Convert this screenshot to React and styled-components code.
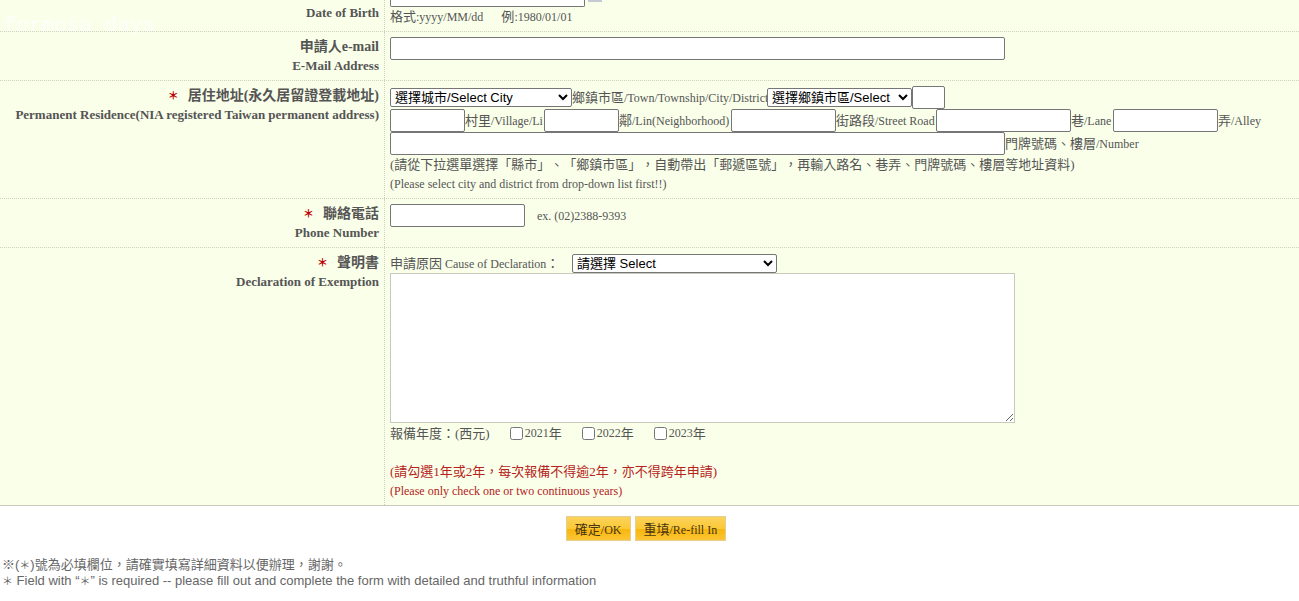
import React from "react";
import styled, { createGlobalStyle } from "styled-components";

const serif = `"Liberation Serif", "Noto Sans CJK TC", serif`;
const sans = `"Liberation Sans", "Noto Sans CJK TC", sans-serif`;

const GlobalStyle = createGlobalStyle`
  *, *::before, *::after { box-sizing: border-box; }
  body {
    margin: 0;
    background: #fff;
    color: #555;
    font: 13px/19px ${serif};
    text-spacing-trim: space-all;
  }
`;

const Page = styled.main`
  position: relative;
`;

const Watermark = styled.span`
  position: absolute;
  top: 16px;
  left: 4px;
  color: rgba(255, 255, 255, 0.8);
  font: 21px/20px "Liberation Mono", monospace;
  pointer-events: none;
`;

const Sheet = styled.div`
  background: #faffea;
  border-bottom: 1px solid #c6cbbb;
`;

const Row = styled.div`
  display: grid;
  grid-template-columns: 385px minmax(0, 1fr);
  border-bottom: 1px dotted #ccd2bd;
  &:last-child { border-bottom: 0; }
`;

const Heading = styled.div`
  padding: ${(p) => (p.$clipped ? 3 : 5)}px 5px 5px 0;
  border-right: 1px dotted #ccd2bd;
  text-align: right;
  font-weight: bold;
  font-size: 14px;
  white-space: nowrap;
  label { display: block; }
`;

const EnglishTitle = styled.span`
  display: block;
  font-size: 13px;
`;

/* Latin runs are set one step smaller than the Chinese beside them. */
const En = styled.span`
  font-size: 12px;
  line-height: 1;
`;

const Star = styled.span`
  font-size: 11px;
  line-height: 1;
`;

const RequiredStar = styled(Star)`
  margin-right: 9px;
  color: #b00;
`;

const Content = styled.div`
  padding: ${(p) => (p.$clipped ? 0 : 5)}px 0 5px 5px;
`;

const Line = styled.div`
  display: flex;
  align-items: center;
  min-height: ${(p) => p.$height || 19}px;
  white-space: nowrap;
`;

const TextBox = styled.input`
  flex: none;
  width: ${(p) => p.$width}px;
  height: 23px;
  padding: 1px 2px;
  border: 1px solid #767676;
  border-radius: 2px;
  background: #fff;
  font: 13px ${sans};
`;

const ClippedBox = styled(TextBox)`
  height: 7px;
  border-top: 0;
  border-radius: 0 0 2px 2px;
`;

const CalendarButton = styled.button`
  align-self: flex-start;
  width: 14px;
  height: 2px;
  margin-left: 3px;
  padding: 0;
  border: 0;
  background: #c3cad3;
`;

const Caption = styled.label`
  flex: none;
  width: ${(p) => (p.$width ? `${p.$width}px` : "auto")};
`;

const Select = styled.select`
  flex: none;
  width: ${(p) => p.$width}px;
  height: 19px;
  padding: 0;
  border: 1px solid #767676;
  border-radius: 2px;
  background-color: #fff;
  color: #000;
  font: 13px ${sans};
`;

const Memo = styled.textarea`
  display: block;
  width: 625px;
  height: 150px;
  border: 1px solid #c6cbbb;
  background: #fff;
`;

const Years = styled(Line)`
  gap: 20px;
  margin-bottom: 19px;
`;

const Year = styled.label`
  display: flex;
  align-items: center;
  input { width: 13px; height: 13px; margin: 0 2px 0 0; }
`;

const Warning = styled.div`
  color: #b5231a;
`;

const Example = styled.span`
  margin-left: ${(p) => p.$gap}px;
`;

const Actions = styled.div`
  display: flex;
  justify-content: center;
  gap: 4px;
  padding: 10px 7px 16px 0;
`;

const Button = styled.button`
  height: 25px;
  padding: 0 8px;
  border: 1px solid #e3cf93;
  background: linear-gradient(#fbd25c 0, #fbc936 50%, #f8b60c 52%, #fcc535 100%);
  color: #4a3512;
  font: 13px ${serif};
`;

const Notes = styled.footer`
  padding: 0 2px;
  color: #666;
  font: 13px/16px ${sans};
  p { margin: 0; }
`;

export default function App() {
  return (
    <Page>
      <GlobalStyle />
      <form onSubmit={(e) => e.preventDefault()}>
        <Sheet>
          <Row>
            <Heading $clipped>
              <label htmlFor="birth"><EnglishTitle>Date of Birth</EnglishTitle></label>
            </Heading>
            <Content $clipped>
              <Line $height={7}>
                <ClippedBox id="birth" $width={195} />
                <CalendarButton type="button" aria-label="Calendar" />
              </Line>
              <Line>
                <span>格式<En>:yyyy/MM/dd</En></span>
                <Example $gap={18}>例<En>:1980/01/01</En></Example>
              </Line>
            </Content>
          </Row>
          <Row>
            <Heading>
              <label htmlFor="email">申請人e-mail<EnglishTitle>E-Mail Address</EnglishTitle></label>
            </Heading>
            <Content><Line><TextBox id="email" type="email" $width={615} /></Line></Content>
          </Row>
          <Row>
            <Heading>
              <label htmlFor="city">
                <RequiredStar>＊</RequiredStar>居住地址(永久居留證登載地址)
                <EnglishTitle>Permanent Residence(NIA registered Taiwan permanent address)</EnglishTitle>
              </label>
            </Heading>
            <Content>
              <Line $height={23}>
                <Select id="city" $width={182}><option>選擇城市/Select City</option></Select>
                <Caption $width={195} htmlFor="district">鄉鎮市區<En>/Town/Township/City/District</En></Caption>
                <Select id="district" $width={145}><option>選擇鄉鎮市區/Select</option></Select>
                <TextBox aria-label="Postal code" $width={33} />
              </Line>
              <Line $height={23}>
                <TextBox id="village" $width={75} />
                <Caption $width={79} htmlFor="village">村里<En>/Village/Li</En></Caption>
                <TextBox id="lin" $width={75} />
                <Caption $width={112} htmlFor="lin">鄰<En>/Lin(Neighborhood)</En></Caption>
                <TextBox id="street" $width={105} />
                <Caption $width={100} htmlFor="street">街路段<En>/Street Road</En></Caption>
                <TextBox id="lane" $width={135} />
                <Caption $width={42} htmlFor="lane">巷<En>/Lane</En></Caption>
                <TextBox id="alley" $width={105} />
                <Caption htmlFor="alley">弄<En>/Alley</En></Caption>
              </Line>
              <Line $height={23}>
                <TextBox id="number" $width={615} />
                <Caption htmlFor="number">門牌號碼、樓層<En>/Number</En></Caption>
              </Line>
              <Line>(請從下拉選單選擇「縣市」、「鄉鎮市區」，自動帶出「郵遞區號」，再輸入路名、巷弄、門牌號碼、樓層等地址資料)</Line>
              <Line><En>(Please select city and district from drop-down list first!!)</En></Line>
            </Content>
          </Row>
          <Row>
            <Heading>
              <label htmlFor="phone">
                <RequiredStar>＊</RequiredStar>聯絡電話<EnglishTitle>Phone Number</EnglishTitle>
              </label>
            </Heading>
            <Content>
              <Line>
                <TextBox id="phone" type="tel" $width={135} />
                <Example $gap={12}><En>ex. (02)2388-9393</En></Example>
              </Line>
            </Content>
          </Row>
          <Row>
            <Heading>
              <label htmlFor="memo">
                <RequiredStar>＊</RequiredStar>聲明書<EnglishTitle>Declaration of Exemption</EnglishTitle>
              </label>
            </Heading>
            <Content>
              <Line $height={20}>
                <Caption $width={182} htmlFor="cause">申請原因<En> Cause of Declaration</En>：</Caption>
                <Select id="cause" $width={205}><option>請選擇 Select</option></Select>
              </Line>
              <Memo id="memo" />
              <Years $height={20}>
                <span>報備年度：(西元)</span>
                {[2021, 2022, 2023].map((y) => (
                  <Year key={y}><input type="checkbox" /><En>{y}</En>年</Year>
                ))}
              </Years>
              <Warning>(請勾選1年或2年，每次報備不得逾2年，亦不得跨年申請)</Warning>
              <Warning><En>(Please only check one or two continuous years)</En></Warning>
            </Content>
          </Row>
        </Sheet>
        <Actions>
          <Button type="submit">確定<En>/OK</En></Button>
          <Button type="reset">重填<En>/Re-fill In</En></Button>
        </Actions>
      </form>
      <Notes>
        <p>※(<Star>＊</Star>)號為必填欄位，請確實填寫詳細資料以便辦理，謝謝。</p>
        <p><Star>＊</Star> Field with “<Star>＊</Star>” is required -- please fill out and complete the form with detailed and truthful information</p>
      </Notes>
      <Watermark>formosa days</Watermark>
    </Page>
  );
}
